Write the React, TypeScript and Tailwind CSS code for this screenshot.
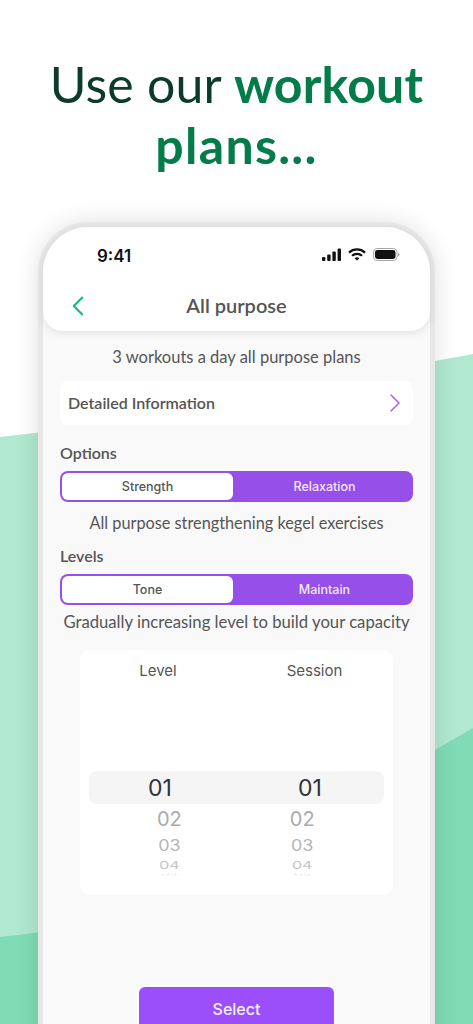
import React from 'react';
import { ChevronLeft, ChevronRight } from 'lucide-react';

function Segmented({ left, right }: { left: string; right: string }) {
    return (
        <div className="flex h-[31px] rounded-[8px] bg-[#964fe9] p-[2px] pt-[3px] font-['Inter',sans-serif] text-[12.5px] font-medium">
            <div className="-mt-[1px] flex w-[171px] items-center justify-center rounded-[6px] bg-white pt-[1px] text-[#555555]">{left}</div>
            <div className="flex flex-1 items-center justify-center pl-[5px] text-[#f3e9ff]">{right}</div>
        </div>
    );
}

function Wheel() {
    const rows = [
        { text: '02', cls: 'h-[29px] text-[20px] text-[#ababab]' },
        { text: '03', cls: 'h-[25px] text-[18px] text-[#b5b5b5] scale-y-[0.85]' },
        { text: '04', cls: 'h-[14px] text-[16px] text-[#c4c4c4] scale-y-[0.65]' },
        { text: '05', cls: 'h-[5px] text-[13px] text-[#dddddd] scale-y-[0.35]' },
    ];
    return (
        <div className="flex flex-col items-center font-['Inter',sans-serif]">
            {rows.map((r) => (
                <div key={r.text} className={`flex items-center overflow-hidden leading-none ${r.cls}`}>
                    {r.text}
                </div>
            ))}
        </div>
    );
}

export default function App() {
    return (
        <div className="relative h-[1024px] w-[473px] overflow-hidden bg-white font-['Lato',sans-serif]">
            {/* Background waves */}
            <svg className="absolute inset-0" width="473" height="1024" viewBox="0 0 473 1024">
                <path d="M0 437 L60 430 L473 354 V1024 H0 Z" fill="#b0e8d0" />
                <path d="M0 937 L60 930 L435 750 L473 728 V1024 H0 Z" fill="#7fdcb4" />
            </svg>

            <h1 className="relative pt-[54px] text-center text-[50px] leading-[61px] tracking-[0.2px] text-[#0c3b2a]">
                Use our <span className="font-bold text-[#047c4a]">workout</span>
                <br />
                <span className="font-bold tracking-[1.3px] text-[#047c4a]">plans...</span>
            </h1>

            {/* Phone */}
            <div className="relative mx-auto mt-[46px] h-[900px] w-[397px] rounded-t-[50px] border-[5px] border-b-0 border-[#e7e7e7] bg-[#f9f9f9] shadow-[0_0_24px_rgba(0,0,0,0.12)]">
                <div className="rounded-t-[45px] rounded-b-[20px] bg-white shadow-[0_2px_8px_rgba(0,0,0,0.1)]">
                    <div className="flex h-[57px] items-start justify-between pl-[54px] pr-[30px] pt-[21px]">
                        <span className="font-['Inter',sans-serif] text-[17px] font-semibold leading-none text-[#111111]">9:41</span>
                        <div className="flex items-center gap-[6px]">
                            <svg width="20" height="13" viewBox="0 0 20 13" fill="#111111">
                                <rect x="0" y="9" width="3.4" height="4" rx="1" />
                                <rect x="5.2" y="6.5" width="3.4" height="6.5" rx="1" />
                                <rect x="10.4" y="3.5" width="3.4" height="9.5" rx="1" />
                                <rect x="15.6" y="0.5" width="3.4" height="12.5" rx="1" />
                            </svg>
                            <svg width="18" height="13" viewBox="0 0 18 13" fill="none" stroke="#111111" strokeWidth="2.2">
                                <path d="M1 4.6 C5.5 0.4 12.5 0.4 17 4.6" />
                                <path d="M4 7.7 C6.8 5.2 11.2 5.2 14 7.7" />
                                <path d="M9 12.6 L6.6 10.2 C8 9 10 9 11.4 10.2 Z" fill="#111111" stroke="none" />
                            </svg>
                            <svg width="27" height="13" viewBox="0 0 27 13" className="ml-[1px]">
                                <rect x="0.5" y="0.5" width="23.5" height="12" rx="3.6" fill="none" stroke="#a8a8a8" />
                                <rect x="2" y="2" width="20.5" height="9" rx="2.4" fill="#111111" />
                                <path d="M25 4.5 C26 4.8 26.5 5.5 26.5 6.5 C26.5 7.5 26 8.2 25 8.5 Z" fill="#a8a8a8" />
                            </svg>
                        </div>
                    </div>
                    <div className="relative flex h-[47px] items-start justify-center pt-[8px]">
                        <ChevronLeft className="absolute left-[18px] top-[5px] text-[#10b981]" size={34} strokeWidth={1.4} />
                        <span className="text-[20px] font-semibold leading-[26px] text-[#555555]">All purpose</span>
                    </div>
                </div>

                <div className="px-[17px] pt-[16px]">
                    <p className="text-center text-[16.5px] leading-[20px] text-[#555555]">3 workouts a day all purpose plans</p>

                    <div className="mt-[14px] flex h-[44px] items-center justify-between rounded-[8px] bg-white pl-[8px] pr-[2px]">
                        <span className="text-[16px] font-semibold text-[#555555]">Detailed Information</span>
                        <ChevronRight className="text-[#a855f7]" size={32} strokeWidth={1} />
                    </div>

                    <h2 className="mt-[18px] text-[16px] font-semibold leading-[20px] text-[#555555]">Options</h2>
                    <div className="mt-[8px]">
                        <Segmented left="Strength" right="Relaxation" />
                    </div>
                    <p className="mt-[11px] text-center text-[16.3px] leading-[20px] text-[#555555]">All purpose strengthening kegel exercises</p>

                    <h2 className="mt-[13px] text-[16px] font-semibold leading-[20px] text-[#555555]">Levels</h2>
                    <div className="mt-[8px]">
                        <Segmented left="Tone" right="Maintain" />
                    </div>
                    <p className="mt-[7px] whitespace-nowrap text-center text-[16.7px] leading-[20px] text-[#555555]">Gradually increasing level to build your capacity</p>

                    {/* Picker */}
                    <div className="mx-[20px] mt-[18px] h-[245px] rounded-[10px] bg-white px-[9px] pt-[11px] font-['Inter',sans-serif]">
                        <div className="flex text-[15px] leading-[20px] text-[#555555]">
                            <span className="w-[138px] text-center">Level</span>
                            <span className="flex-1 pl-[18px] text-center">Session</span>
                        </div>
                        <div className="mt-[90px] flex h-[33px] items-center rounded-[8px] bg-[#f5f5f5] pt-[1px] text-[23px] text-[#333333]">
                            <span className="ml-[59px]">01</span>
                            <span className="ml-[126px]">01</span>
                        </div>
                        <div className="flex">
                            <div className="ml-[68px]">
                                <Wheel />
                            </div>
                            <div className="ml-[108px]">
                                <Wheel />
                            </div>
                        </div>
                    </div>

                    <button className="mx-auto mt-[92px] flex h-[60px] w-[195px] justify-center rounded-[6px] bg-[#9b4ffb] pt-[10px] font-['Inter',sans-serif] text-[16px] font-medium text-[#f8f0ff]">
                        Select
                    </button>
                </div>
            </div>
        </div>
    );
}
